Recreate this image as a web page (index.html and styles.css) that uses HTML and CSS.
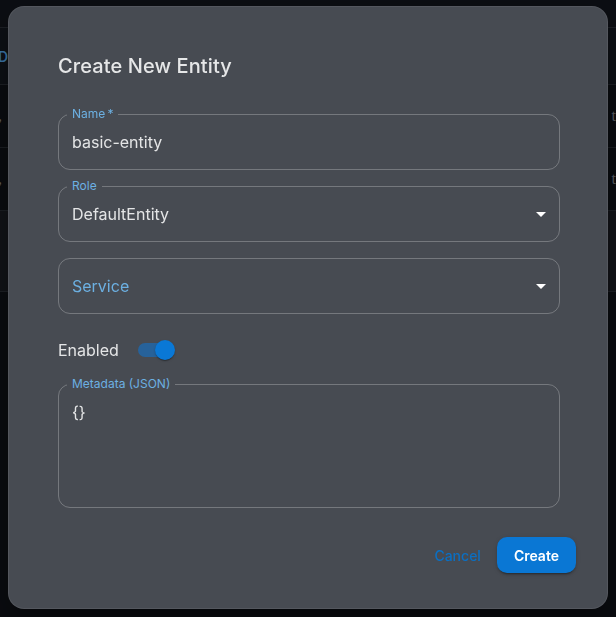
FILE: index.html
```html
<!DOCTYPE html>
<html lang="en">
<head>
<meta charset="utf-8">
<title>Create New Entity</title>
<link rel="stylesheet" href="styles.css">
</head>
<body>
<div class="bg">
  <div class="bg-top"></div>
  <div class="bg-head"><span class="h-id">ID</span></div>
  <div class="bg-row"><span class="c-l">y,</span><span class="c-r">ty</span></div>
  <div class="bg-row"><span class="c-l">y,</span><span class="c-r">ty</span></div>
  <div class="bg-foot"></div>
</div>
<div class="overlay">
  <div class="dialog" role="dialog" aria-labelledby="dlg-title">
    <h2 class="title" id="dlg-title">Create New Entity</h2>
    <div class="form">
      <div class="field">
        <span class="label">Name&thinsp;*</span>
        <span class="value">basic-entity</span>
      </div>
      <div class="field select gap">
        <span class="label">Role</span>
        <span class="value">DefaultEntity</span>
        <svg class="arrow" viewBox="0 0 24 24" width="24" height="24"><path d="M7 10l5 5 5-5z"/></svg>
      </div>
      <div class="field select gap">
        <span class="placeholder">Service</span>
        <svg class="arrow" viewBox="0 0 24 24" width="24" height="24"><path d="M7 10l5 5 5-5z"/></svg>
      </div>
      <div class="switch-row">
        <span class="switch-label">Enabled</span>
        <span class="switch"><span class="track"></span><span class="thumb"></span></span>
      </div>
      <div class="field textarea">
        <span class="label">Metadata (JSON)</span>
        <span class="value">{}</span>
      </div>
    </div>
    <div class="actions">
      <button class="btn btn-text" type="button">Cancel</button>
      <button class="btn btn-contained" type="button">Create</button>
    </div>
  </div>
</div>
</body>
</html>
```

FILE: styles.css
```css
* { box-sizing: border-box; }

html, body {
  margin: 0;
  padding: 0;
  height: 100%;
}

body {
  background: #0a0c10;
  font-family: Inter, "Noto Sans", "Liberation Sans", sans-serif;
  overflow: hidden;
}

/* background page (behind the backdrop) */
.bg {
  display: flex;
  flex-direction: column;
}
.bg-top {
  height: 28px;
  background: #0c0e13;
  border-bottom: 1px solid #1d2025;
}
.bg-head {
  height: 57px;
  background: #0d1015;
  border-bottom: 1px solid #1d2025;
  display: flex;
  align-items: center;
}
.h-id {
  margin-left: -6px;
  color: #3b75a6;
  font-size: 14px;
  font-weight: 600;
}
.bg-row {
  height: 63px;
  background: #0a0c10;
  border-bottom: 1px solid #1b1e23;
  display: flex;
  justify-content: space-between;
  align-items: center;
  font-family: "Liberation Serif", serif;
  font-size: 16px;
  color: #5a5d62;
  overflow: hidden;
}
.bg-row .c-l { margin-left: -9px; }
.bg-row .c-r { margin-right: -8px; }
.bg-foot {
  height: 81px;
  background: #111317;
  border-bottom: 1px solid #1d2025;
}

/* overlay dialog */
.overlay {
  position: fixed;
  inset: 0;
  display: flex;
  justify-content: center;
  align-items: flex-start;
  padding-top: 6px;
}

.dialog {
  width: 600px;
  height: 603px;
  background: #474b52;
  border: 1px solid rgba(255, 255, 255, 0.07);
  border-radius: 16px;
  box-shadow: 0 11px 15px -7px rgba(0,0,0,.2), 0 24px 38px 3px rgba(0,0,0,.14), 0 9px 46px 8px rgba(0,0,0,.12);
  padding: 43px 47px 35px 49px;
  display: flex;
  flex-direction: column;
}

.title {
  margin: 0;
  font-size: 20px;
  line-height: 32px;
  font-weight: 500;
  color: #e6e7e8;
  letter-spacing: 0.1px;
}

.form {
  margin-top: 32px;
  display: flex;
  flex-direction: column;
}

.field {
  position: relative;
  height: 56px;
  border: 1px solid rgba(255, 255, 255, 0.25);
  border-radius: 12px;
  padding: 0 13px;
  display: flex;
  align-items: center;
}
.field.gap { margin-top: 16px; }

.label {
  position: absolute;
  top: -9px;
  left: 8px;
  padding: 0 5px;
  background: #474b52;
  font-size: 12px;
  line-height: 16px;
  color: #6cb0e2;
}

.value {
  font-size: 16px;
  line-height: 23px;
  color: #e4e5e6;
}
.placeholder {
  font-size: 16px;
  line-height: 23px;
  color: #6cb0e2;
}

.arrow {
  position: absolute;
  right: 6px;
  top: 15px;
  fill: #ffffff;
}

.switch-row {
  margin-top: 17px;
  height: 38px;
  display: flex;
  align-items: center;
}
.switch-label {
  font-size: 16px;
  color: #e4e5e6;
}
.switch {
  position: relative;
  margin-left: 19px;
  width: 38px;
  height: 20px;
  display: flex;
  align-items: center;
}
.track {
  width: 34px;
  height: 14px;
  border-radius: 7px;
  background: #27629a;
}
.thumb {
  position: absolute;
  left: 17px;
  top: 0;
  width: 20px;
  height: 20px;
  border-radius: 50%;
  background: #0a78d6;
  box-shadow: 0 2px 1px -1px rgba(0,0,0,.2), 0 1px 1px rgba(0,0,0,.14), 0 1px 3px rgba(0,0,0,.12);
}

.field.textarea {
  margin-top: 15px;
  height: 124px;
  align-items: flex-start;
  padding-top: 16px;
}

.actions {
  margin-top: 29px;
  display: flex;
  justify-content: flex-end;
  gap: 4px;
  padding-right: 0;
}
.actions { margin-right: -16px; }

.btn {
  height: 36px;
  border: none;
  font-family: Inter, "Noto Sans", "Liberation Sans", sans-serif;
  font-size: 14px;
  cursor: pointer;
  border-radius: 10px;
}
.btn-text {
  background: transparent;
  color: #0b6fc2;
  font-weight: 500;
  padding: 0 12px;
}
.btn-contained {
  background: #0a77d4;
  color: #ffffff;
  font-weight: 600;
  padding: 0 17px;
  box-shadow: 0 3px 1px -2px rgba(0,0,0,.2), 0 2px 2px rgba(0,0,0,.14), 0 1px 5px rgba(0,0,0,.12);
}
```
